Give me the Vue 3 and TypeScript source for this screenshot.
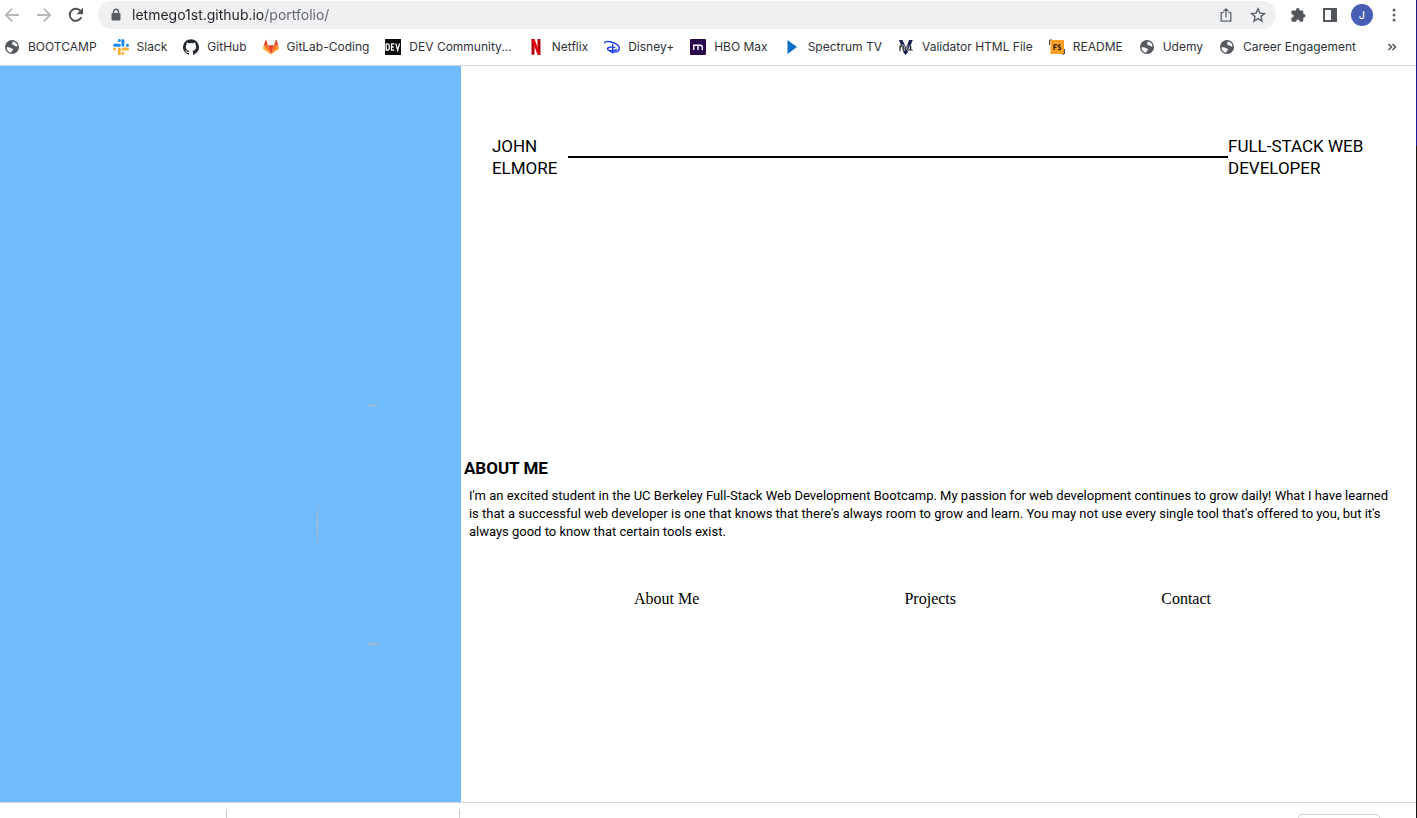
<script setup lang="ts">
import { ref } from 'vue'

interface Bookmark {
  label: string
  icon: string
}

const address = ref('letmego1st.github.io/portfolio/')

const bookmarks: Bookmark[] = [
  { label: 'BOOTCAMP', icon: 'globe' },
  { label: 'Slack', icon: 'slack' },
  { label: 'GitHub', icon: 'github' },
  { label: 'GitLab-Coding', icon: 'gitlab' },
  { label: 'DEV Community...', icon: 'dev' },
  { label: 'Netflix', icon: 'netflix' },
  { label: 'Disney+', icon: 'disney' },
  { label: 'HBO Max', icon: 'hbo' },
  { label: 'Spectrum TV', icon: 'spectrum' },
  { label: 'Validator HTML File', icon: 'nu' },
  { label: 'README', icon: 'fs' },
  { label: 'Udemy', icon: 'globe' },
  { label: 'Career Engagement', icon: 'globe' },
]

const links = ['About Me', 'Projects', 'Contact']
</script>

<template>
  <div class="window">
    <header class="chrome">
      <div class="toolbar">
        <button class="tool" aria-label="Back">
          <svg width="16" height="16" viewBox="0 0 16 16" fill="none" stroke="#b4b6b9" stroke-width="1.8"><path d="M15 8H2M8.2 1.6 1.8 8l6.4 6.4" /></svg>
        </button>
        <button class="tool" aria-label="Forward">
          <svg width="16" height="16" viewBox="0 0 16 16" fill="none" stroke="#b4b6b9" stroke-width="1.8"><path d="M1 8h13M7.8 1.6 14.2 8l-6.4 6.4" /></svg>
        </button>
        <button class="tool" aria-label="Reload">
          <svg width="16" height="16" viewBox="0 0 16 16"><path d="M13.3 10.2A6 6 0 1 1 12.6 4.2" fill="none" stroke="#505357" stroke-width="2" /><path d="M15 .8v6.4H8.6z" fill="#505357" /></svg>
        </button>
        <div class="omnibox">
          <svg class="lock" width="10" height="14" viewBox="0 0 10 14"><path d="M2.6 6V3.6a2.4 2.4 0 0 1 4.8 0V6" fill="none" stroke="#5a5d61" stroke-width="1.4" /><rect x="0.5" y="5" width="9" height="7.5" rx="1" fill="#5a5d61" /></svg>
          <input v-model="address" class="address" type="text" aria-label="Address" spellcheck="false" />
          <button class="tool" aria-label="Share">
            <svg width="16" height="16" viewBox="0 0 16 16" fill="none" stroke="#5f6368" stroke-width="1.3"><path d="M5.500 5.600H3.200v8.600h9.600V5.600h-2.300M8 10.500V2M5.400 4.400 8 1.800l2.600 2.600" /></svg>
          </button>
          <button class="tool" aria-label="Bookmark this page">
            <svg width="16" height="16" viewBox="0 0 16 16" fill="none" stroke="#5f6368" stroke-width="1.4"><path d="m8 1.800 1.800 4.300 4.700.4-3.600 3.100 1.100 4.600L8 11.700l-4 2.500 1.100-4.600-3.600-3.100 4.700-.4z" /></svg>
          </button>
        </div>
        <button class="tool" aria-label="Extensions">
          <svg width="16" height="16" viewBox="0 0 16 16" fill="#53565a"><path d="M6 2.800a1.800 1.800 0 0 1 3.600 0v.6h2.500c.7 0 1.200.5 1.200 1.200v2.300h.4a1.800 1.800 0 0 1 0 3.600h-.4v3c0 .7-.5 1.200-1.200 1.200H9.700v-.5a1.700 1.700 0 0 0-3.400 0v.5H2.600c-.7 0-1.200-.5-1.200-1.200v-2.900H2A1.700 1.700 0 0 0 2 7.200h-.6V4.600c0-.7.5-1.200 1.200-1.200H6z" /></svg>
        </button>
        <button class="tool" aria-label="Side panel">
          <svg width="16" height="16" viewBox="0 0 16 16"><rect x="2" y="2" width="12" height="12" fill="none" stroke="#53565a" stroke-width="2" /><rect x="9" y="2" width="5" height="12" fill="#53565a" /></svg>
        </button>
        <button class="avatar" aria-label="Profile">J</button>
        <button class="tool" aria-label="Menu">
          <svg width="16" height="16" viewBox="0 0 16 16" fill="#5f6368"><circle cx="8" cy="3" r="1.5" /><circle cx="8" cy="8" r="1.5" /><circle cx="8" cy="13" r="1.5" /></svg>
        </button>
      </div>

      <nav class="bookmarks" aria-label="Bookmarks">
        <a v-for="item in bookmarks" :key="item.label" class="bookmark" href="#">
          <svg width="16" height="16" viewBox="0 0 16 16" aria-hidden="true">
            <template v-if="item.icon === 'globe'">
              <circle cx="8" cy="8" r="7" fill="#55585d" />
              <path d="M8.700 2.400c2.600.2 4.600 2.100 4.900 4.500-1 1-2.100.6-2.600-.3-.8.2-1.800-.2-1.900-1.100C8 5.700 7.600 5 8 4.200c.5-.4.9-.9.7-1.800zM2.500 8.300c1.400 0 3-.2 4.100.7.7.7 2 .3 2.500 1.200.3.9-.9 1.200-1.300 1.800-.3.6-.6 1.200-.4 1.700-2.700-.2-4.900-2.600-4.900-5.400z" fill="#fff" />
            </template>
            <g v-else-if="item.icon === 'slack'" stroke-width="3" stroke-linecap="round">
              <path d="M6.300 1.500h.1M1.600 6.300h4.700M9.900 1.600v4.700M14.400 6.300h.1" stroke="#1d8bf5" />
              <path d="M1.500 9.900h.1M6.300 9.900v4.600M9.900 9.900h4.600M9.800 14.500h.1" stroke="#fdae38" />
            </g>
            <path v-else-if="item.icon === 'github'" fill="#24292f" d="M8 .2a8 8 0 0 0-2.500 15.600c.4.1.5-.2.5-.4v-1.500c-2.200.5-2.700-.9-2.700-.9-.4-.9-.9-1.200-.9-1.200-.7-.5.1-.5.1-.5.8.1 1.200.8 1.200.8.7 1.200 1.900.9 2.300.7.100-.5.3-.9.5-1.100-1.800-.2-3.600-.9-3.600-4 0-.9.3-1.600.8-2.100-.1-.2-.4-1 .1-2.100 0 0 .7-.2 2.200.8a7.600 7.600 0 0 1 4 0c1.500-1 2.200-.8 2.200-.8.5 1.100.2 1.900.1 2.100.5.5.8 1.200.8 2.100 0 3.100-1.900 3.700-3.600 3.900.3.300.5.800.5 1.500v2.300c0 .2.100.5.500.4A8 8 0 0 0 8 .2z" />
            <template v-else-if="item.icon === 'gitlab'">
              <path d="m8 15.500 3-9.300H5z" fill="#e24329" />
              <path d="M8 15.500 5 6.200H.8zM8 15.500l3-9.300h4.200z" fill="#fc6d26" />
              <path d="M.8 6.200 0 9q-.1.600.4 1L8 15.500zM15.200 6.200 16 9q.1.600-.4 1L8 15.500z" fill="#fca326" />
              <path d="M.8 6.200H5L3.200.8Q2.900.2 2.600.8zM15.200 6.200H11L12.800.8q.3-.6.6 0z" fill="#e24329" />
            </template>
            <template v-else-if="item.icon === 'dev'">
              <rect width="16" height="16" fill="#0b0b0b" />
              <path d="M1.200 4.800v6.400h1q2 0 2-1.800V6.600q0-1.800-2-1.800zM9.300 4.800H6.500v6.400h2.800M6.500 8h2.200M10.800 4.500l1.900 6.600 1.900-6.600" fill="none" stroke="#fff" stroke-width="1.3" />
            </template>
            <template v-else-if="item.icon === 'netflix'">
              <path d="M3.500 0h3v15.600l-3 .4zM9.500 0h3v16l-3-.4z" fill="#b1060f" />
              <path d="M3.500 0h3l6 16-3-.4z" fill="#e50914" />
            </template>
            <g v-else-if="item.icon === 'disney'" fill="none" stroke="#2340f0" stroke-linecap="round">
              <path d="M.6 3.800C.4 2.600 3.600 2.300 6 2.700c5 .8 9.300 3.500 9.300 6.700 0 3.800-5.600 4.600-9.300 3" stroke-width="1.4" />
              <path d="M8.600 5.600v8.200M10.800 8.500C7.500 7.700 3.300 8.300 3.500 10c.3 2 6.500 2.600 9 .6" stroke-width="1.4" />
            </g>
            <template v-else-if="item.icon === 'hbo'">
              <rect width="16" height="16" rx="1" fill="#29094b" />
              <path d="M3.700 11V6.300h6.800q1.800 0 1.800 1.700v3M8 6.300V11" fill="none" stroke="#fff" stroke-width="1.4" />
            </template>
            <path v-else-if="item.icon === 'spectrum'" d="m3.500 1 9.500 7-9.500 7z" fill="#0a6fc9" />
            <template v-else-if="item.icon === 'nu'">
              <path d="M1 1h3.500l3.700 8L11 1h3.800L9.700 13.500 7.500 16l-2-2.500z" fill="#1c2153" />
              <path d="M2 12V6.500M2.300 8q3.500-3 3.500 1v3M9 6.500V9q0 3 3.600 1.500V6.500M12.700 6.500V11h2" fill="none" stroke="#fff" stroke-width="2.2" />
              <path d="M2 12V6.500M2.300 8q3.500-3 3.500 1v3M9 6.500V9q0 3 3.600 1.500V6.500M12.700 6.500V11h2" fill="none" stroke="#222" stroke-width="1.2" />
            </template>
            <template v-else>
              <rect x="1.5" y="1" width="13.5" height="14" fill="#fd9f27" />
              <path d="M.6 1v5M15.400 10v5M1 .8h1.500M13.500 15.200H15" stroke="#493b2a" fill="none" />
              <path d="M5 11V5.800h3M5 8.300h2.500M11.600 6.200q-2.400-.9-2.400.7c0 1.400 2.500 1 2.500 2.600 0 1.500-1.500 1.300-2.700.9" stroke="#33230c" stroke-width="1.3" fill="none" />
            </template>
          </svg>
          <span>{{ item.label }}</span>
        </a>
        <button class="tool more" aria-label="More bookmarks">
          <svg width="16" height="16" viewBox="0 0 16 16" fill="none" stroke="#53565a" stroke-width="1.5"><path d="m4.500 5 3 3-3 3M8.500 5l3 3-3 3" /></svg>
        </button>
      </nav>
    </header>

    <div class="page">
      <aside class="sidebar">
        <svg class="arc" width="68" height="240" viewBox="0 0 68 240" aria-hidden="true" fill="#b9b8bb">
          <path d="M49 .5q7-1.200 14 0-7 1.200-14 0zM49 239.500q7-2 14 0-7 1-14 0zM.5 98q1 22 0 44-1-22 0-44z" />
        </svg>
      </aside>
      <main class="content">
        <div class="banner">
          <h1 class="name">JOHN ELMORE</h1>
          <hr class="rule" />
          <p class="role">FULL-STACK WEB DEVELOPER</p>
        </div>
        <section class="about">
          <h2>ABOUT ME</h2>
          <p>I'm an excited student in the UC Berkeley Full-Stack Web Development Bootcamp. My passion for web development continues to grow daily! What I have learned is that a successful web developer is one that knows that there's always room to grow and learn. You may not use every single tool that's offered to you, but it's always good to know that certain tools exist.</p>
        </section>
        <nav class="links" aria-label="Sections">
          <a v-for="link in links" :key="link" href="#">{{ link }}</a>
        </nav>
      </main>
    </div>

    <footer class="downloads">
      <div class="download"></div>
      <div class="download"></div>
      <button class="show-all" aria-label="Show all downloads"></button>
    </footer>
  </div>
</template>

<style>
body {
  margin: 0;
  background: #fff;
}
</style>

<style scoped>
.window {
  display: flex;
  flex-direction: column;
  box-sizing: border-box;
  min-height: 100vh;
  border-right: 1px solid;
  border-image: linear-gradient(#1a1a7c 0, #1a1a9c 146px, #141414 147px) 1;
}

.chrome {
  border-bottom: 1px solid #d5d6d9;
  font-family: Inter, "Liberation Sans", sans-serif;
  color: #303338;
}

button {
  padding: 0;
  border: 0;
  background: none;
  font: inherit;
}

.tool {
  display: flex;
  flex: none;
}

.toolbar {
  display: flex;
  align-items: center;
  gap: 16px;
  height: 30px;
  padding: 0 14px 0 4px;
}

.omnibox {
  display: flex;
  flex: 1;
  align-items: center;
  gap: 16px;
  height: 28px;
  box-sizing: border-box;
  margin-right: -2px;
  margin-left: -2px;
  padding: 0 10px 0 13px;
  border-radius: 14px;
  background: #eff0f2;
}

.lock {
  flex: none;
  margin-right: -5px;
}

.address {
  flex: 1;
  min-width: 0;
  padding: 0;
  border: 0;
  outline: 0;
  background: linear-gradient(90deg, #202124 133px, #5f6368 133px);
  background-clip: text;
  color: transparent;
  font: 14px/20px Inter, "Liberation Sans", sans-serif;
}

.avatar {
  flex: none;
  width: 22px;
  height: 22px;
  margin: 0 -3px;
  border-radius: 50%;
  background: #465fb5;
  color: #fff;
  font-size: 11px;
}

.bookmarks {
  display: flex;
  align-items: center;
  gap: 16px;
  height: 33px;
  padding: 0 16px 2px 4px;
}

.bookmark {
  display: flex;
  align-items: center;
  gap: 8px;
  color: inherit;
  font-size: 12px;
  line-height: 16px;
  text-decoration: none;
  white-space: nowrap;
}

.bookmark svg {
  flex: none;
}

.more {
  margin-left: auto;
}

.page {
  display: flex;
  flex: 1;
  font-family: Roboto, "Liberation Sans", sans-serif;
  color: #000;
}

.sidebar {
  position: relative;
  flex: none;
  width: 32.55%;
  background: #70bcfc;
}

.arc {
  position: absolute;
  top: 339px;
  left: 317px;
}

.content {
  flex: 1;
  min-width: 0;
}

h1,
h2,
p {
  margin: 0;
}

.banner {
  display: flex;
  align-items: center;
  padding: 69px 31px 0;
}

.name,
.role {
  flex: none;
  font-size: 17px;
  font-weight: 400;
  line-height: 22px;
}

.name {
  width: 76px;
}

.role {
  width: 157px;
}

.rule {
  flex: 1;
  height: 2px;
  margin: 0;
  border: 0;
  background: #000;
}

.about {
  padding: 278px 4px 0 3px;
}

.about h2 {
  font-size: 17px;
  line-height: 22px;
}

.about p {
  padding: 8px 20px 0 5px;
  font-size: 13px;
  line-height: 18px;
}

.links {
  display: flex;
  justify-content: space-between;
  padding: 49px 205px 0 173px;
  font: 16px/18px "Liberation Serif", serif;
}

.links a {
  color: inherit;
  text-decoration: none;
}

.downloads {
  display: flex;
  box-sizing: border-box;
  height: 16px;
  padding: 6px 36px 0 0;
  border-top: 1px solid #d5d6d9;
  overflow: hidden;
}

.download {
  flex: none;
  box-sizing: border-box;
  width: 227px;
  height: 9px;
  border-right: 1px solid #c8c9cc;
}

.download + .download {
  width: 233px;
}

.show-all {
  box-sizing: border-box;
  width: 82px;
  height: 28px;
  margin: 5px 0 0 auto;
  border: 1px solid #cfd0dc;
  border-radius: 4px;
}
</style>
